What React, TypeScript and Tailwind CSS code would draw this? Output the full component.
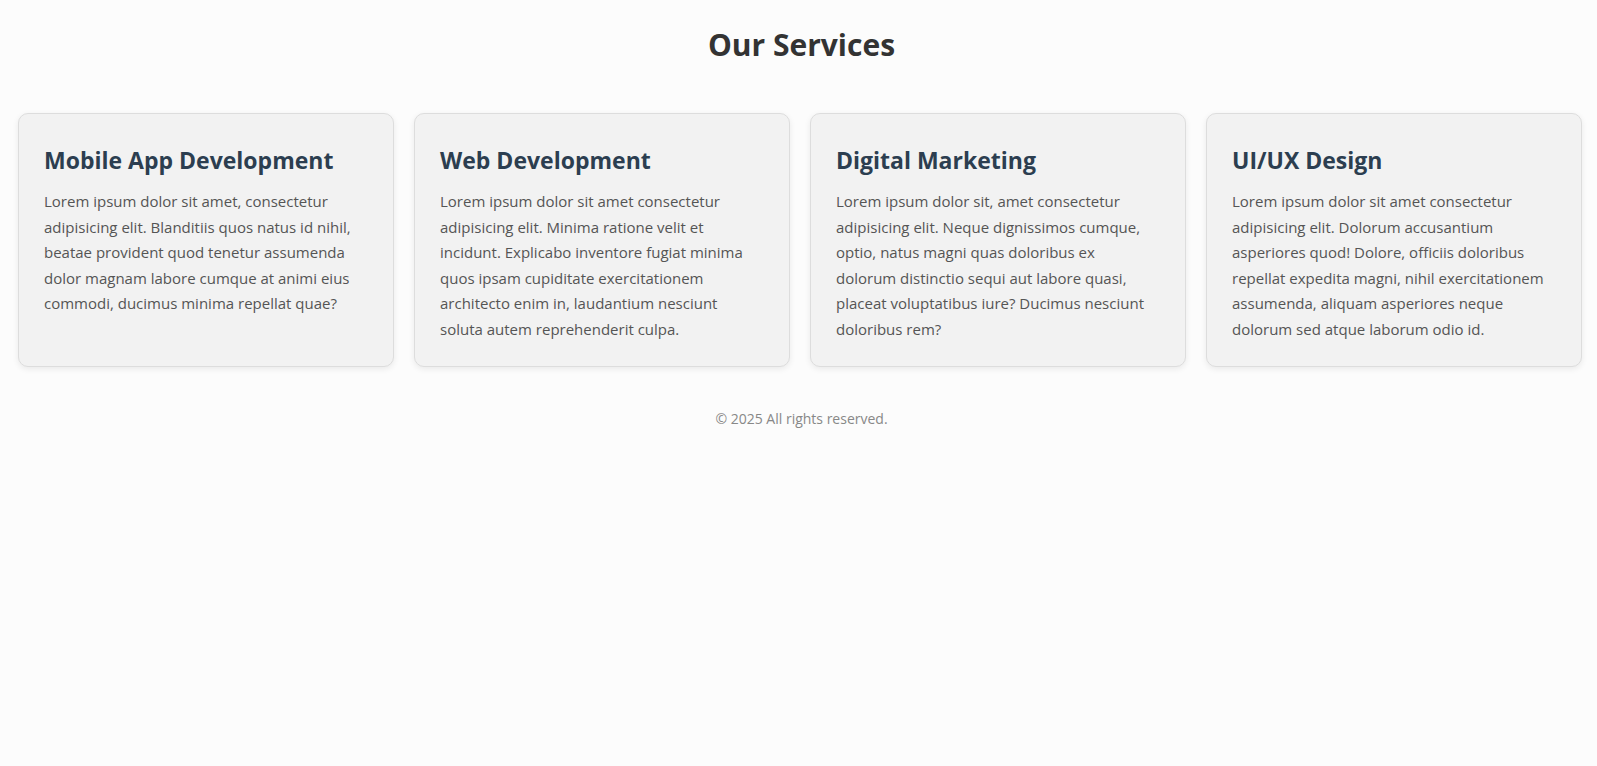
import React from "react";

const cards: { title: string; lines: string[] }[] = [
  {
    title: "Mobile App Development",
    lines: [
      "Lorem ipsum dolor sit amet, consectetur",
      "adipisicing elit. Blanditiis quos natus id nihil,",
      "beatae provident quod tenetur assumenda",
      "dolor magnam labore cumque at animi eius",
      "commodi, ducimus minima repellat quae?",
    ],
  },
  {
    title: "Web Development",
    lines: [
      "Lorem ipsum dolor sit amet consectetur",
      "adipisicing elit. Minima ratione velit et",
      "incidunt. Explicabo inventore fugiat minima",
      "quos ipsam cupiditate exercitationem",
      "architecto enim in, laudantium nesciunt",
      "soluta autem reprehenderit culpa.",
    ],
  },
  {
    title: "Digital Marketing",
    lines: [
      "Lorem ipsum dolor sit, amet consectetur",
      "adipisicing elit. Neque dignissimos cumque,",
      "optio, natus magni quas doloribus ex",
      "dolorum distinctio sequi aut labore quasi,",
      "placeat voluptatibus iure? Ducimus nesciunt",
      "doloribus rem?",
    ],
  },
  {
    title: "UI/UX Design",
    lines: [
      "Lorem ipsum dolor sit amet consectetur",
      "adipisicing elit. Dolorum accusantium",
      "asperiores quod! Dolore, officiis doloribus",
      "repellat expedita magni, nihil exercitationem",
      "assumenda, aliquam asperiores neque",
      "dolorum sed atque laborum odio id.",
    ],
  },
];

export default function App() {
  return (
    <div
      className="min-h-screen w-full overflow-hidden bg-[#fcfcfc]"
      style={{ fontFamily: '"Open Sans", "Noto Sans", sans-serif' }}
    >
      <div className="pl-[18px] pr-[15px]">
        <h1 className="pl-[3px] pt-[23px] text-center text-[30px] font-bold leading-[44px] text-[#333333]">
          Our Services
        </h1>
        <div className="mt-[46px] grid grid-cols-4 gap-[20px]">
          {cards.map((c) => (
            <div
              key={c.title}
              className="rounded-[10px] border border-[#dddddd] bg-[#f2f2f2] px-[25px] pb-[24px] pt-[28px] shadow-[0_2px_6px_rgba(0,0,0,0.08)]"
            >
              <h3 className="text-[23px] font-bold leading-[36px] text-[#2c3e50]">
                {c.title}
              </h3>
              <p className="mt-[11px] whitespace-nowrap text-[15px] leading-[25.5px] text-[#555555]">
                {c.lines.map((l, i) => (
                  <React.Fragment key={i}>
                    {l}
                    {i < c.lines.length - 1 && <br />}
                  </React.Fragment>
                ))}
              </p>
            </div>
          ))}
        </div>
        <footer className="pl-[3px] pt-[42px] text-center text-[14px] leading-[20px] text-[#888888]">
          © 2025 All rights reserved.
        </footer>
      </div>
    </div>
  );
}
